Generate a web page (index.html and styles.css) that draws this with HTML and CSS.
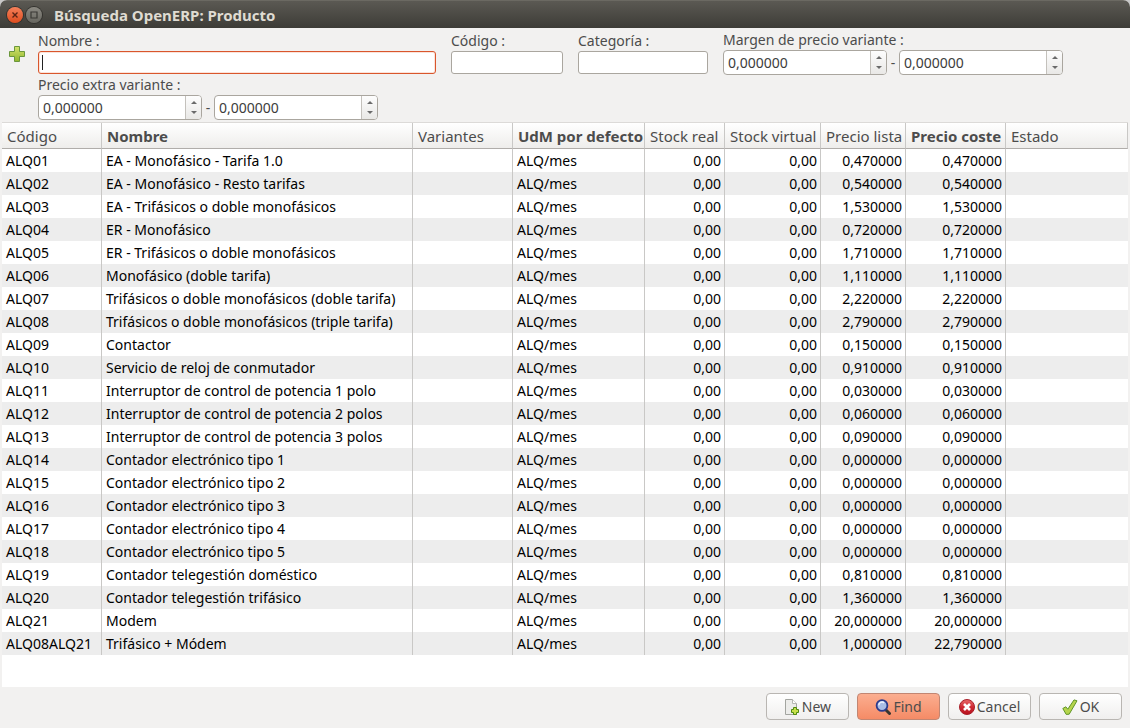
FILE: index.html
```html
<!DOCTYPE html>
<html lang="es">
<head>
<meta charset="utf-8">
<title>Búsqueda OpenERP: Producto</title>
<link rel="stylesheet" href="styles.css">
</head>
<body>
<div class="window">
  <header class="titlebar">
    <button class="winbtn winbtn-close" type="button" aria-label="Cerrar"><svg width="16" height="16" viewBox="0 0 16 16"><path d="M5.500 5.500l5 5M10.500 5.500l-5 5" stroke="#5a2415" stroke-width="1.400" fill="none"/></svg></button>
    <button class="winbtn" type="button" aria-label="Maximizar"><svg width="16" height="16" viewBox="0 0 16 16"><path d="M5 5h6v6H5z" stroke="#3a3935" stroke-width="1.200" fill="none"/></svg></button>
    <h1 class="title">Búsqueda OpenERP: Producto</h1>
  </header>

  <form class="search">
    <button class="add" type="button" aria-label="Añadir filtro"><svg width="18" height="18" viewBox="0 0 18 18"><defs><linearGradient id="plus" x1="0" y1="0" x2="0" y2="1"><stop offset="0" stop-color="#d3e26c"/><stop offset="1" stop-color="#92b72f"/></linearGradient></defs><path d="M6.500 1.500h5v5h5v5h-5v5h-5v-5h-5v-5h5z" fill="url(#plus)" stroke="#6b973c"/></svg></button>
    <div class="fields">
      <div class="field">
        <label class="label" for="nombre">Nombre :</label>
        <span class="caret-box"><input class="entry entry-active" id="nombre" type="text"></span>
      </div>
      <div class="field">
        <label class="label" for="codigo">Código :</label>
        <input class="entry" id="codigo" type="text">
      </div>
      <div class="field">
        <label class="label" for="categoria">Categoría :</label>
        <input class="entry" id="categoria" type="text">
      </div>
      <div class="field">
        <label class="label" for="margen-min">Margen de precio variante :</label>
        <div class="range">
          <div class="spin"><input class="spin-value" id="margen-min" type="text" value="0,000000"><div class="spin-arrows"><button class="arrow arrow-up" type="button" aria-label="Más"></button><button class="arrow arrow-down" type="button" aria-label="Menos"></button></div></div>
          <span class="dash">-</span>
          <div class="spin"><input class="spin-value" type="text" value="0,000000" aria-label="Margen máximo"><div class="spin-arrows"><button class="arrow arrow-up" type="button" aria-label="Más"></button><button class="arrow arrow-down" type="button" aria-label="Menos"></button></div></div>
        </div>
      </div>
      <div class="field">
        <label class="label" for="extra-min">Precio extra variante :</label>
        <div class="range">
          <div class="spin"><input class="spin-value" id="extra-min" type="text" value="0,000000"><div class="spin-arrows"><button class="arrow arrow-up" type="button" aria-label="Más"></button><button class="arrow arrow-down" type="button" aria-label="Menos"></button></div></div>
          <span class="dash">-</span>
          <div class="spin"><input class="spin-value" type="text" value="0,000000" aria-label="Precio extra máximo"><div class="spin-arrows"><button class="arrow arrow-up" type="button" aria-label="Más"></button><button class="arrow arrow-down" type="button" aria-label="Menos"></button></div></div>
        </div>
      </div>
    </div>
  </form>

  <main class="list">
    <table class="grid">
      <colgroup><col class="c-code"><col class="c-name"><col class="c-var"><col class="c-uom"><col class="c-real"><col class="c-virtual"><col class="c-list"><col class="c-cost"><col></colgroup>
      <thead>
        <tr><th>Código</th><th class="strong">Nombre</th><th>Variantes</th><th class="strong">UdM por defecto</th><th>Stock real</th><th>Stock virtual</th><th>Precio lista</th><th class="strong">Precio coste</th><th>Estado</th></tr>
      </thead>
      <tbody>
        <tr><td>ALQ01</td><td>EA - Monofásico - Tarifa 1.0</td><td></td><td>ALQ/mes</td><td class="num">0,00</td><td class="num">0,00</td><td class="num">0,470000</td><td class="num">0,470000</td><td></td></tr>
        <tr><td>ALQ02</td><td>EA - Monofásico - Resto tarifas</td><td></td><td>ALQ/mes</td><td class="num">0,00</td><td class="num">0,00</td><td class="num">0,540000</td><td class="num">0,540000</td><td></td></tr>
        <tr><td>ALQ03</td><td>EA - Trifásicos o doble monofásicos</td><td></td><td>ALQ/mes</td><td class="num">0,00</td><td class="num">0,00</td><td class="num">1,530000</td><td class="num">1,530000</td><td></td></tr>
        <tr><td>ALQ04</td><td>ER - Monofásico</td><td></td><td>ALQ/mes</td><td class="num">0,00</td><td class="num">0,00</td><td class="num">0,720000</td><td class="num">0,720000</td><td></td></tr>
        <tr><td>ALQ05</td><td>ER - Trifásicos o doble monofásicos</td><td></td><td>ALQ/mes</td><td class="num">0,00</td><td class="num">0,00</td><td class="num">1,710000</td><td class="num">1,710000</td><td></td></tr>
        <tr><td>ALQ06</td><td>Monofásico (doble tarifa)</td><td></td><td>ALQ/mes</td><td class="num">0,00</td><td class="num">0,00</td><td class="num">1,110000</td><td class="num">1,110000</td><td></td></tr>
        <tr><td>ALQ07</td><td>Trifásicos o doble monofásicos (doble tarifa)</td><td></td><td>ALQ/mes</td><td class="num">0,00</td><td class="num">0,00</td><td class="num">2,220000</td><td class="num">2,220000</td><td></td></tr>
        <tr><td>ALQ08</td><td>Trifásicos o doble monofásicos (triple tarifa)</td><td></td><td>ALQ/mes</td><td class="num">0,00</td><td class="num">0,00</td><td class="num">2,790000</td><td class="num">2,790000</td><td></td></tr>
        <tr><td>ALQ09</td><td>Contactor</td><td></td><td>ALQ/mes</td><td class="num">0,00</td><td class="num">0,00</td><td class="num">0,150000</td><td class="num">0,150000</td><td></td></tr>
        <tr><td>ALQ10</td><td>Servicio de reloj de conmutador</td><td></td><td>ALQ/mes</td><td class="num">0,00</td><td class="num">0,00</td><td class="num">0,910000</td><td class="num">0,910000</td><td></td></tr>
        <tr><td>ALQ11</td><td>Interruptor de control de potencia 1 polo</td><td></td><td>ALQ/mes</td><td class="num">0,00</td><td class="num">0,00</td><td class="num">0,030000</td><td class="num">0,030000</td><td></td></tr>
        <tr><td>ALQ12</td><td>Interruptor de control de potencia 2 polos</td><td></td><td>ALQ/mes</td><td class="num">0,00</td><td class="num">0,00</td><td class="num">0,060000</td><td class="num">0,060000</td><td></td></tr>
        <tr><td>ALQ13</td><td>Interruptor de control de potencia 3 polos</td><td></td><td>ALQ/mes</td><td class="num">0,00</td><td class="num">0,00</td><td class="num">0,090000</td><td class="num">0,090000</td><td></td></tr>
        <tr><td>ALQ14</td><td>Contador electrónico tipo 1</td><td></td><td>ALQ/mes</td><td class="num">0,00</td><td class="num">0,00</td><td class="num">0,000000</td><td class="num">0,000000</td><td></td></tr>
        <tr><td>ALQ15</td><td>Contador electrónico tipo 2</td><td></td><td>ALQ/mes</td><td class="num">0,00</td><td class="num">0,00</td><td class="num">0,000000</td><td class="num">0,000000</td><td></td></tr>
        <tr><td>ALQ16</td><td>Contador electrónico tipo 3</td><td></td><td>ALQ/mes</td><td class="num">0,00</td><td class="num">0,00</td><td class="num">0,000000</td><td class="num">0,000000</td><td></td></tr>
        <tr><td>ALQ17</td><td>Contador electrónico tipo 4</td><td></td><td>ALQ/mes</td><td class="num">0,00</td><td class="num">0,00</td><td class="num">0,000000</td><td class="num">0,000000</td><td></td></tr>
        <tr><td>ALQ18</td><td>Contador electrónico tipo 5</td><td></td><td>ALQ/mes</td><td class="num">0,00</td><td class="num">0,00</td><td class="num">0,000000</td><td class="num">0,000000</td><td></td></tr>
        <tr><td>ALQ19</td><td>Contador telegestión doméstico</td><td></td><td>ALQ/mes</td><td class="num">0,00</td><td class="num">0,00</td><td class="num">0,810000</td><td class="num">0,810000</td><td></td></tr>
        <tr><td>ALQ20</td><td>Contador telegestión trifásico</td><td></td><td>ALQ/mes</td><td class="num">0,00</td><td class="num">0,00</td><td class="num">1,360000</td><td class="num">1,360000</td><td></td></tr>
        <tr><td>ALQ21</td><td>Modem</td><td></td><td>ALQ/mes</td><td class="num">0,00</td><td class="num">0,00</td><td class="num">20,000000</td><td class="num">20,000000</td><td></td></tr>
        <tr><td>ALQ08ALQ21</td><td>Trifásico + Módem</td><td></td><td>ALQ/mes</td><td class="num">0,00</td><td class="num">0,00</td><td class="num">1,000000</td><td class="num">22,790000</td><td></td></tr>
      </tbody>
    </table>
  </main>

  <footer class="actions">
    <button class="btn" type="button"><svg width="16" height="16" viewBox="0 0 16 16"><path d="M1.500.5h7l4 4v11h-11z" fill="#ececea" stroke="#a3a5a0"/><path d="M8.500.5v4h4" fill="#fff" stroke="#b5b7b2"/><path d="M9.500 8.500h3v2h2v3h-2v2h-3v-2h-2v-3h2z" fill="#c6e04a" stroke="#4f8a10"/></svg>New</button>
    <button class="btn btn-find" type="button"><svg width="16" height="16" viewBox="0 0 16 16"><path d="M11 11l3.500 3.500" stroke="#39352f" stroke-width="3" stroke-linecap="round"/><circle cx="7" cy="6.500" r="5.400" fill="#a9bde6" stroke="#2b3b8c" stroke-width="1.800"/><path d="M3.800 6.200a3.200 3.200 0 0 1 5.200-2.400" fill="none" stroke="#eef3ff" stroke-width="1.500"/></svg>Find</button>
    <button class="btn" type="button"><svg width="16" height="16" viewBox="0 0 16 16"><defs><linearGradient id="stop" x1="0" y1="0" x2="0" y2="1"><stop offset="0" stop-color="#e86a6a"/><stop offset=".5" stop-color="#d02a34"/><stop offset="1" stop-color="#b8101c"/></linearGradient></defs><circle cx="8" cy="8" r="7.500" fill="url(#stop)" stroke="#a8202a"/><path d="M5 5l6 6M11 5l-6 6" stroke="#fff" stroke-width="2.600"/></svg>Cancel</button>
    <button class="btn" type="button"><svg width="16" height="16" viewBox="0 0 16 16"><path d="M.8 9.500l3-1.700 2 2.400L12 .9l3 .9L7.200 15.200l-3 .2z" fill="#b5d44c" stroke="#5f9427" stroke-linejoin="round"/></svg>OK</button>
  </footer>
</div>
</body>
</html>
```
FILE: styles.css
```css
* { box-sizing: border-box; }

body {
  margin: 0;
  background: #c8c8c8;
  font: 14px/18px "Noto Sans", "Open Sans", sans-serif;
  color: #4c4c4c;
}

button, input { font: inherit; color: inherit; }

.window {
  display: flex;
  flex-direction: column;
  min-height: 100vh;
  background: #f2f1f0;
  border-radius: 7px 7px 0 0;
  overflow: hidden;
}

.titlebar {
  display: flex;
  align-items: center;
  gap: 3px;
  height: 28px;
  padding: 0 7px;
  background: linear-gradient(#5b5953, #3d3c37);
  border-top: 1px solid #6b6962;
}

.winbtn {
  width: 16px;
  height: 16px;
  padding: 0;
  border: 0;
  border-radius: 50%;
  background: linear-gradient(#8b8982, #67665f);
  box-shadow: 0 0 0 1px #33322e;
}
.winbtn-close { background: linear-gradient(#f5805a, #de4c1e); }
.winbtn svg, .add svg { display: block; }

.title {
  margin: 0 0 0 9px;
  font-size: 15px;
  line-height: 18px;
  color: #dfdbd2;
}

.search { display: flex; padding: 4px 67px 2px 8px; }

.add {
  flex: none;
  display: flex;
  align-items: center;
  width: 30px;
  height: 43px;
  padding: 0;
  border: 0;
  background: none;
}

.fields {
  flex: 1;
  display: grid;
  grid-template-columns: minmax(0, 1fr) 112px 130px auto;
  gap: 2px 15px;
  align-items: center;
}

.field { min-width: 0; white-space: nowrap; }
.label {
  display: block;
  margin-bottom: 2px;
  line-height: 16px;
}

.entry {
  display: block;
  width: 100%;
  height: 23px;
  padding: 0 4px;
  border: 1px solid #aaa69f;
  border-radius: 3px;
  background: #fff;
}
.entry-active { border-color: #d9562c; box-shadow: inset 0 0 0 1px #fbe3da; }

.caret-box { display: block; position: relative; }
.caret-box::after {
  content: "";
  position: absolute;
  left: 4px;
  top: 4px;
  width: 1px;
  height: 15px;
  background: #222;
}

.range { display: flex; align-items: center; }
.dash { width: 12px; text-align: center; }

.spin {
  display: flex;
  width: 164px;
  height: 25px;
  border: 1px solid #aaa69f;
  border-radius: 4px;
  overflow: hidden;
  background: #fff;
}
.spin-value {
  flex: 1;
  min-width: 0;
  padding: 0 4px;
  border: 0;
  background: none;
  color: #3c3c3c;
}
.spin-arrows {
  display: flex;
  flex-direction: column;
  width: 16px;
  padding: 1px 0;
  border-left: 1px solid #c4c1bc;
  background: linear-gradient(#fdfdfd, #e9e8e6);
}
.arrow {
  flex: 1;
  display: flex;
  justify-content: center;
  align-items: center;
  padding: 0;
  border: 0;
  background: none;
}
.arrow::after {
  content: "";
  border: 3px solid transparent;
}
.arrow-up::after { border-top: 0; border-bottom-color: #6a6a6a; }
.arrow-down::after { border-bottom: 0; border-top-color: #6a6a6a; }

.list {
  flex: 1;
  margin: 0 2px;
  border-top: 1px solid #dcdad8;
  background: #fff;
}

.grid {
  width: 100%;
  table-layout: fixed;
  border-collapse: separate;
  border-spacing: 0;
  color: #000;
}
.c-code, .c-var, .c-cost { width: 100px; }
.c-name { width: 311px; }
.c-uom { width: 132px; }
.c-real { width: 80px; }
.c-virtual { width: 96px; }
.c-list { width: 85px; }

.grid th, .grid td {
  padding: 0 3px 0 4px;
  border-right: 1px solid #c9c8c6;
  text-align: left;
  white-space: nowrap;
}
.grid th {
  height: 26px;
  padding: 1px 0 0 5px;
  border-bottom: 1px solid #b0adaa;
  background: linear-gradient(#fff, #eeedeb);
  color: #4c4c4c;
  font-size: 15px;
  font-weight: 400;
}
.grid th.strong { font-weight: 700; }
.grid td { height: 23px; }
.grid td:last-child { border-right: 0; }
.grid td.num { text-align: right; }
.grid tbody tr:nth-child(even) { background: #ededed; }

.actions {
  display: flex;
  justify-content: flex-end;
  gap: 8px;
  padding: 6px 8px 8px;
}
.btn {
  display: flex;
  justify-content: center;
  align-items: center;
  gap: 2px;
  width: 83px;
  height: 27px;
  padding: 0;
  border: 1px solid #b9b6b2;
  border-radius: 4px;
  background: linear-gradient(#fff, #f0efee);
}
.btn-find { border-color: #c28672; background: linear-gradient(#fbae90, #f58b66); }
```
